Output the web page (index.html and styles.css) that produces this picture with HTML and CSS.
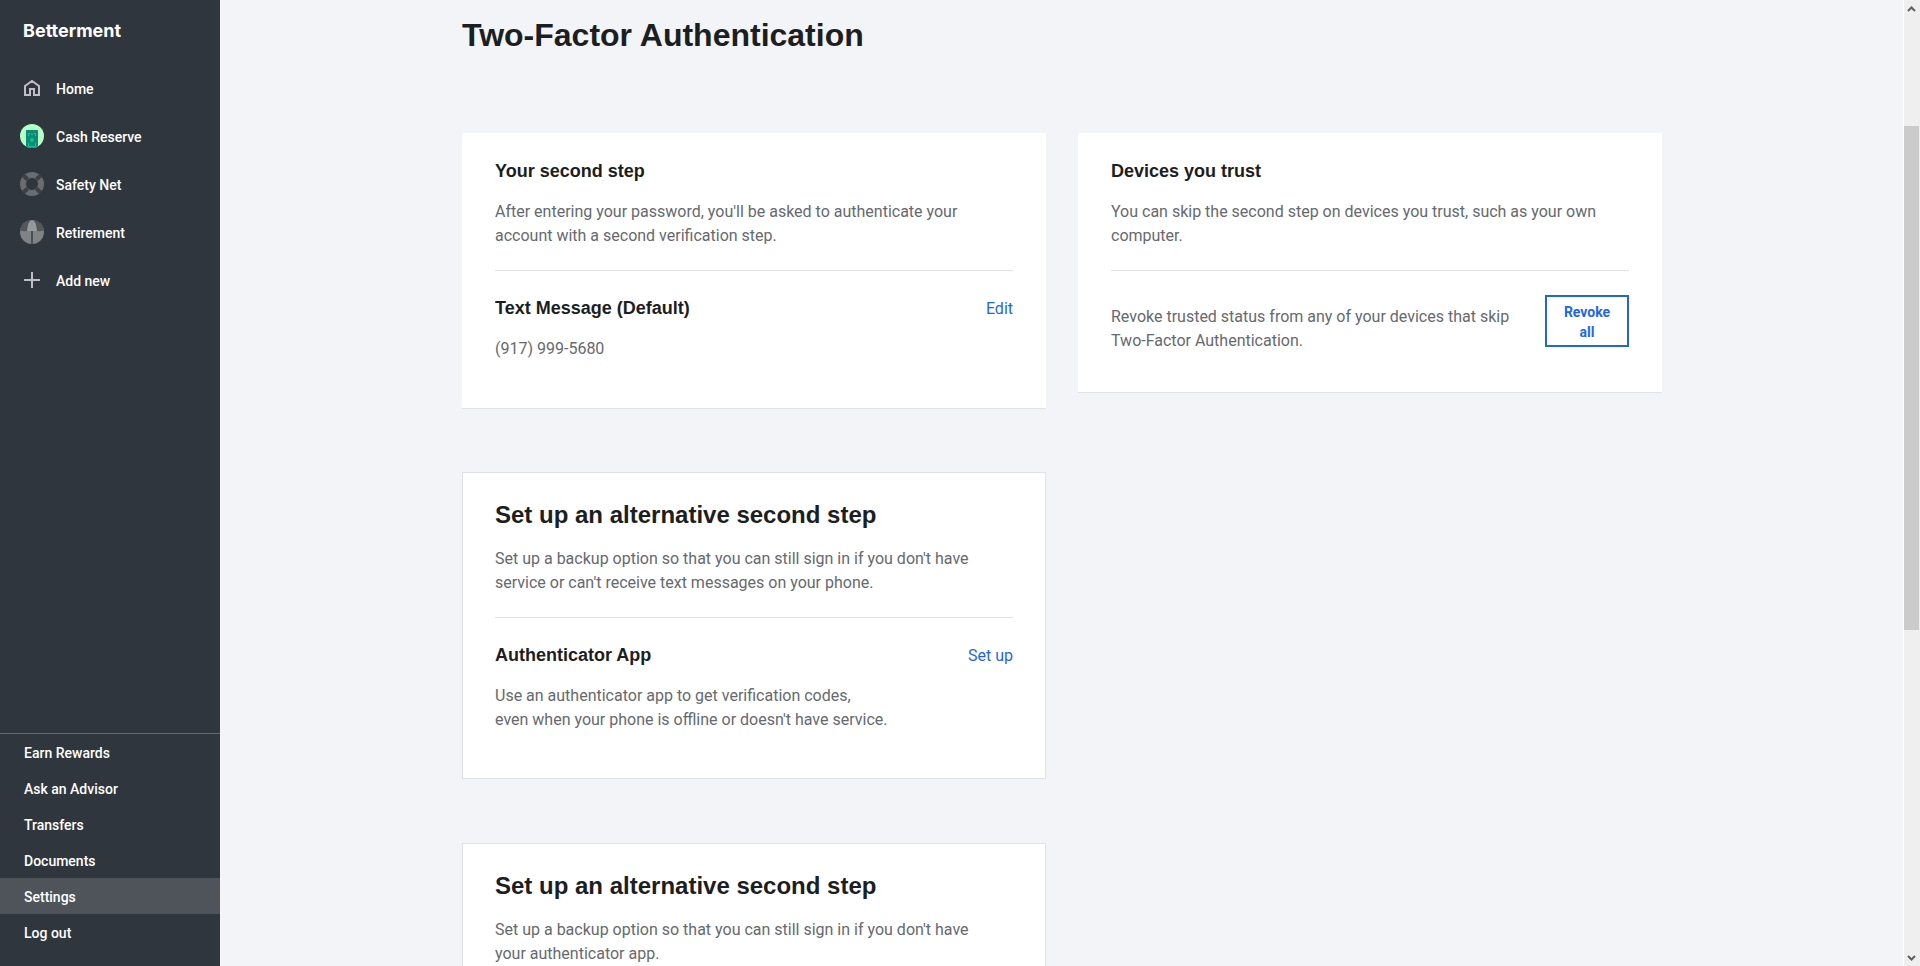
FILE: index.html
```html
<!DOCTYPE html>
<html lang="en">
<head>
    <meta charset="UTF-8">
    <meta name="viewport" content="width=device-width, initial-scale=1.0">
    <title>Two-Factor Authentication - Betterment</title>

    <link rel="stylesheet" href="styles.css">
</head>
<body>
    <aside class="sidebar">
        <a href="#" class="logo">Betterment</a>

        <nav class="accounts">
            <a href="#">
                <svg width="24" height="24" viewBox="0 0 24 24" fill="none" stroke="#bcbfc6" stroke-width="2">
                    <path d="M5 19V10l7-5 7 5v9h-5v-6h-4v6z"/>
                </svg>
                Home
            </a>
            <a href="#">
                <svg width="24" height="24" viewBox="0 0 24 24">
                    <clipPath id="round"><circle cx="12" cy="12" r="12"/></clipPath>
                    <g clip-path="url(#round)">
                        <rect width="24" height="24" fill="#b4ffc6"/>
                        <rect x="6" y="6" width="12" height="18" fill="#128a75"/>
                        <path d="M8.500 12V9.500h2M13.500 9.500h2V12M8.500 19v3.500h7V19M11 10.500h2" fill="none" stroke="#06c693"/>
                        <circle cx="12" cy="16" r="2" fill="#06c693"/>
                    </g>
                </svg>
                Cash Reserve
            </a>
            <a href="#">
                <svg width="24" height="24" viewBox="0 0 24 24" fill="none" stroke-width="6">
                    <circle cx="12" cy="12" r="9" stroke="#696c71"/>
                    <path d="M4 7l3-3M17 4l3 3M20 17l-3 3M7 20l-3-3" stroke="#3e4144"/>
                </svg>
                Safety Net
            </a>
            <a href="#">
                <svg width="24" height="24" viewBox="0 0 24 24">
                    <g clip-path="url(#round)">
                        <rect width="24" height="24" fill="#808386"/>
                        <path d="M0 0h24v10.500q-6 1-7 .5H7q-2 .5-7-.5z" fill="#55565a"/>
                        <path d="M7 11Q8 0 12 0t5 11z" fill="#96999c"/>
                        <path d="M12 11v13" stroke="#4d4f53" stroke-width="2"/>
                    </g>
                </svg>
                Retirement
            </a>
            <a href="#">
                <svg width="24" height="24" viewBox="0 0 24 24" stroke="#bcbfc6" stroke-width="2">
                    <path d="M12 4v16M4 12h16"/>
                </svg>
                Add new
            </a>
        </nav>

        <nav class="menu">
            <a href="#">Earn Rewards</a>
            <a href="#">Ask an Advisor</a>
            <a href="#">Transfers</a>
            <a href="#">Documents</a>
            <a href="#" class="active">Settings</a>
            <a href="#">Log out</a>
        </nav>
    </aside>

    <main>
        <div class="container">
            <h1>Two-Factor Authentication</h1>

            <div class="cards">
                <section class="card">
                    <h3>Your second step</h3>
                    <p>After entering your password, you'll be asked to authenticate your<br>account with a second verification step.</p>
                    <hr>
                    <div class="row">
                        <h3>Text Message (Default)</h3>
                        <a href="#">Edit</a>
                    </div>
                    <p>(917) 999-5680</p>
                </section>

                <section class="card devices">
                    <h3>Devices you trust</h3>
                    <p>You can skip the second step on devices you trust, such as your own<br>computer.</p>
                    <hr>
                    <div class="revoke">
                        <p>Revoke trusted status from any of your devices that skip<br>Two-Factor Authentication.</p>
                        <button type="button">Revoke all</button>
                    </div>
                </section>

                <section class="card alternative">
                    <h2>Set up an alternative second step</h2>
                    <p>Set up a backup option so that you can still sign in if you don't have<br>service or can't receive text messages on your phone.</p>
                    <hr>
                    <div class="row">
                        <h3>Authenticator App</h3>
                        <a href="#">Set up</a>
                    </div>
                    <p>Use an authenticator app to get verification codes,<br>even when your phone is offline or doesn't have service.</p>
                </section>

                <section class="card alternative">
                    <h2>Set up an alternative second step</h2>
                    <p>Set up a backup option so that you can still sign in if you don't have<br>your authenticator app.</p>
                </section>
            </div>
        </div>
    </main>

    <div class="scrollbar">
        <svg width="16" height="17" viewBox="0 0 16 17" fill="none" stroke="#606060" stroke-width="2">
            <path d="M4 11l3.500-3.500L11 11"/>
        </svg>
        <div class="track">
            <div class="thumb"></div>
        </div>
        <svg width="16" height="17" viewBox="0 0 16 17" fill="none" stroke="#606060" stroke-width="2">
            <path d="M4 7l3.500 3.500L11 7"/>
        </svg>
    </div>
</body>
</html>
```
FILE: styles.css
```css
* {box-sizing: border-box;}

body {
    display: grid;
    grid-template-columns: 220px 1fr 16px;
    height: 100vh;
    margin: 0;
    overflow: hidden;
    background-color: #f2f4f8;
    color: #1c1e21;
    font: 16px/24px Roboto, sans-serif;
}

a {
    color: #1f66e5;
    text-decoration: none;
}

h1, h2, h3, p {margin: 0;}

h1, h2, h3 {font-family: "Liberation Sans", Arial, sans-serif;}

h1 {
    margin-bottom: 78px;
    font-size: 32px;
    line-height: 40px;
}

h2 {
    padding-top: 2px;
    font-size: 24px;
    line-height: 32px;
}

h3 {
    font-size: 18px;
    line-height: 26px;
}

/* sidebar */
.sidebar {
    display: flex;
    flex-direction: column;
    background-color: #30363e;
    font-size: 14px;
    font-weight: 500;
}

.sidebar a {color: #fff;}

.sidebar .logo {
    padding: 19px 23px 22px;
    font: 700 18px/24px Inter, sans-serif;
}

.accounts a {
    display: flex;
    align-items: center;
    gap: 12px;
    height: 48px;
    padding: 0 20px;
}

.accounts svg {margin-bottom: 2px;}

.menu {
    margin-top: auto;
    padding-bottom: 16px;
    border-top: 1px solid #666a70;
}

.menu a {
    display: block;
    padding: 8px 24px 6px;
    line-height: 22px;
}

.menu .active {background-color: #4f535a;}

/* content */
main {
    min-height: 0;
    overflow: hidden;
}

.container {
    max-width: 1200px;
    margin: 0 auto;
    padding-top: 15px;
}

.cards {
    display: grid;
    grid-template-columns: 1fr 1fr;
    gap: 64px 32px;
    align-items: start;
}

.card {
    padding: 24px 32px 46px;
    border: 1px solid #fff;
    background-color: #fff;
    box-shadow: 0 1px 0 #e0e2e8;
}

.card p {
    margin-top: 16px;
    color: #66696f;
}

.card hr {
    margin: 22px 0 24px;
    border: 0;
    border-top: 1px solid #e0e2e8;
}

.devices {padding-bottom: 38px;}

.alternative {
    grid-column: 1;
    border-color: #dfe3e9;
    box-shadow: none;
}

.row {
    display: flex;
    align-items: baseline;
    justify-content: space-between;
}

.revoke {
    display: flex;
    align-items: flex-start;
    gap: 32px;
}

.revoke p {
    flex: 1;
    margin-top: 10px;
}

.revoke button {
    width: 84px;
    padding: 5px 16px 3px;
    border: 2px solid #1f66e5;
    background-color: #fff;
    color: #1f66e5;
    font: 700 14px/20px Roboto, sans-serif;
}

/* scrollbar */
.scrollbar {
    display: flex;
    flex-direction: column;
    background-color: #efefef;
    box-shadow: -1px 0 0 #fff;
}

.track {
    flex: 1;
    display: grid;
    grid-template-rows: 109fr 504fr 319fr;
}

.thumb {
    grid-row: 2;
    margin-right: 1px;
    background-color: #cbcbcb;
}
```
